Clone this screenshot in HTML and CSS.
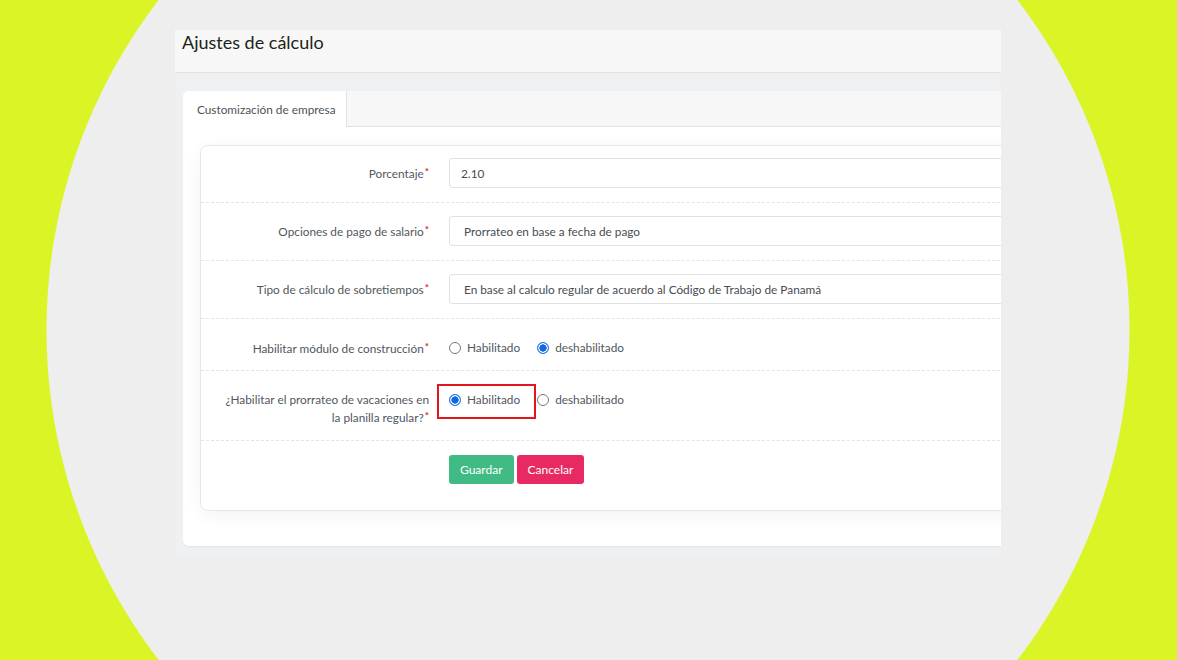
FILE: index.html
```html
<!DOCTYPE html>
<html lang="es">
<head>
    <meta charset="UTF-8">
    <meta name="viewport" content="width=device-width, initial-scale=1.0">
    <title>Ajustes de cálculo</title>
    <link rel="stylesheet" href="styles.css">
</head>
<body>
    <div class="shot">
        <header class="page-header">
            <h1>Ajustes de cálculo</h1>
        </header>
        <div class="content">
            <div class="card">
                <div class="tabs">
                    <a class="tab active" href="#">Customización de empresa</a>
                </div>
                <div class="card-body">
                    <form class="form-box">
                        <div class="row first">
                            <label class="label">Porcentaje<span class="req">*</span></label>
                            <div class="field">
                                <div class="input">2.10</div>
                            </div>
                        </div>
                        <div class="row">
                            <label class="label">Opciones de pago de salario<span class="req">*</span></label>
                            <div class="field">
                                <div class="input select">Prorrateo en base a fecha de pago</div>
                            </div>
                        </div>
                        <div class="row">
                            <label class="label">Tipo de cálculo de sobretiempos<span class="req">*</span></label>
                            <div class="field">
                                <div class="input select">En base al calculo regular de acuerdo al Código de Trabajo de Panamá</div>
                            </div>
                        </div>
                        <div class="row radio-row">
                            <label class="label">Habilitar módulo de construcción<span class="req">*</span></label>
                            <div class="field radios">
                                <label class="option"><span class="radio"></span>Habilitado</label>
                                <label class="option"><span class="radio checked"></span>deshabilitado</label>
                            </div>
                        </div>
                        <div class="row tall">
                            <label class="label">¿Habilitar el prorrateo de vacaciones en la planilla regular?<span class="req">*</span></label>
                            <div class="field radios">
                                <label class="option marked"><span class="radio checked"></span>Habilitado</label>
                                <label class="option"><span class="radio"></span>deshabilitado</label>
                            </div>
                        </div>
                        <div class="row actions">
                            <div class="label"></div>
                            <div class="field buttons">
                                <button type="button" class="btn btn-save">Guardar</button>
                                <button type="button" class="btn btn-cancel">Cancelar</button>
                            </div>
                        </div>
                    </form>
                </div>
            </div>
        </div>
    </div>
</body>
</html>
```

FILE: styles.css
```css
* {
    margin: 0;
    padding: 0;
    box-sizing: border-box;
}
body {
    width: 1177px;
    height: 660px;
    overflow: hidden;
    font-family: Lato, "Open Sans", sans-serif;
    background: radial-gradient(circle 542px at 588px 330px, #eeeeee 99.8%, #dbf426 100%);
    padding-top: 30px;
    padding-left: 175px;
}
.shot {
    width: 826px;
    overflow: hidden;
}
.page-header {
    height: 43px;
    background-color: #f7f7f7;
    border-bottom: 1px solid #dfe3e6;
    padding: 1px 7px;
}
.page-header h1 {
    font-size: 18px;
    font-weight: 400;
    color: #1d1f21;
    line-height: 22px;
}
.content {
    background-color: #eef0f2;
    padding: 18px 0 9px 8px;
}
.card {
    background-color: #ffffff;
    border-radius: 6px 0 0 6px;
    margin-right: -60px;
    border-bottom: 1px solid #dfe5e8;
}
.tabs {
    display: flex;
    height: 36px;
    background-color: #f7f7f7;
    border-bottom: 1px solid #dee2e6;
    border-radius: 6px 0 0 0;
}
.tab {
    width: 164px;
    height: 36px;
    background-color: #ffffff;
    border-right: 1px solid #dee2e6;
    border-radius: 6px 0 0 0;
    color: #4d5359;
    font-size: 11.8px;
    text-decoration: none;
    padding: 11px 0 0 14px;
    margin-bottom: -1px;
}
.card-body {
    padding: 18px 0 35px 17px;
}
.form-box {
    border: 1px solid #e3e8eb;
    border-radius: 8px 0 0 8px;
    box-shadow: 0 4px 18px rgba(0, 0, 0, 0.05);
}
.row {
    display: grid;
    grid-template-columns: 228px 1fr;
    column-gap: 20px;
    align-items: center;
    padding: 13px 0 14px;
    border-bottom: 1px dashed #e4e4e4;
}
.row.first {
    padding-top: 12px;
}
.row.radio-row {
    padding: 20px 0 13px;
}
.row.tall {
    align-items: start;
    padding: 20px 0 13px;
}
.row.actions {
    border-bottom: none;
    padding: 14px 0 26px;
}
.label {
    text-align: right;
    font-size: 11.8px;
    line-height: 17px;
    color: #52575d;
}
.row.tall .label {
    line-height: 18px;
    padding-left: 14px;
}
.req {
    color: #d9262f;
    font-size: 10px;
    font-weight: 700;
    vertical-align: 3px;
    line-height: 0;
    margin-left: 1px;
}
.input {
    height: 30px;
    border: 1px solid #dfe3e6;
    border-radius: 3px;
    font-size: 11.8px;
    color: #474c52;
    padding: 6px 11px;
    line-height: 17px;
}
.input.select {
    padding-left: 14px;
}
.radios {
    display: flex;
    gap: 17px;
    font-size: 11.8px;
    color: #52575d;
    line-height: 18px;
}
.option {
    display: flex;
    align-items: center;
    gap: 6px;
}
.radio {
    width: 12px;
    height: 12px;
    border: 1px solid #7a7a7a;
    border-radius: 50%;
    background-color: #ffffff;
}
.radio.checked {
    border-color: #1a73e8;
    background: radial-gradient(circle, #1467df 3.4px, #ffffff 3.9px, #ffffff 4.5px, #5c9bf0 5px);
}
.option.marked {
    position: relative;
}
.option.marked::after {
    content: "";
    position: absolute;
    top: -7px;
    left: -12px;
    right: -16px;
    bottom: -10px;
    border: 2px solid #e1161e;
}
.buttons {
    display: flex;
    gap: 3px;
}
.btn {
    height: 29px;
    border: none;
    border-radius: 3px;
    color: #ffffff;
    font-family: inherit;
    font-size: 12px;
    padding: 0 11px;
}
.btn-save {
    background-color: #40bb84;
}
.btn-cancel {
    background-color: #e82a62;
}
```
